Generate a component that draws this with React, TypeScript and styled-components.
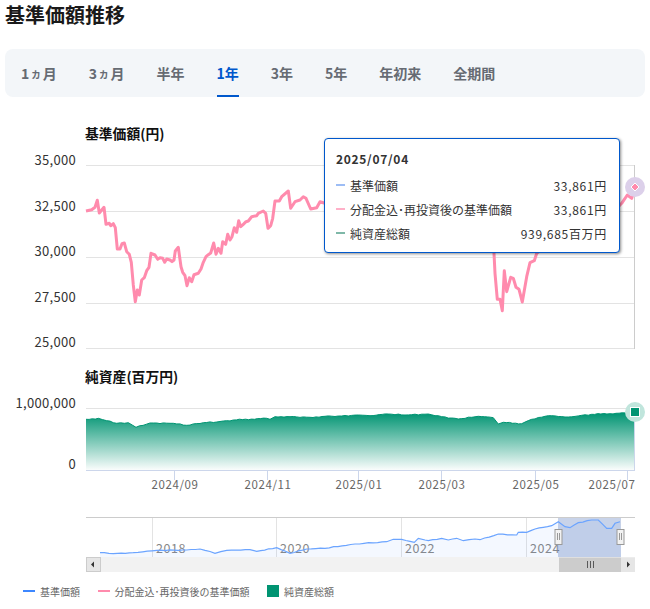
import styled, { createGlobalStyle } from 'styled-components';

const GlobalStyle = createGlobalStyle`
  html, body {
    margin: 0;
    padding: 0;
    background: #fff;
    font-family: "Noto Sans CJK JP", "Noto Sans", sans-serif;
  }
`;

const Page = styled.div`
  width: 650px;
  height: 609px;
  overflow: hidden;
  box-sizing: border-box;
  padding: 0 5px;
`;

const Title = styled.h2`
  margin: 0;
  height: 30px;
  line-height: 30px;
  font-size: 20px;
  font-weight: 700;
  color: #1a1a1a;
`;

const Tabs = styled.div`
  display: flex;
  gap: 32px;
  height: 48px;
  margin-top: 19px;
  padding: 0 16px;
  background: #f3f6f9;
  border-radius: 8px;
`;

const Tab = styled.div<{ $active?: boolean }>`
  display: flex;
  align-items: center;
  height: 48px;
  box-sizing: border-box;
  font-size: 14px;
  font-weight: 700;
  color: ${({ $active }) => ($active ? '#0058cc' : '#666b73')};
  box-shadow: ${({ $active }) => ($active ? 'inset 0 -2px 0 #0058cc' : 'none')};
`;

const Small = styled.span`
  font-size: 11px;
  margin: 0 1.25px;
`;

const ChartBlock = styled.section<{ $top: number }>`
  position: relative;
  margin: ${({ $top }) => $top}px -5px 0;
`;

const ChartTitle = styled.div`
  height: 18px;
  line-height: 16px;
  padding-left: 85px;
  font-size: 13.8px;
  font-weight: 700;
  color: #111;
`;

const Plot = styled.svg`
  display: block;
`;

const AxisLabel = styled.text`
  font-size: 13px;
  fill: #333;
  letter-spacing: 0.3px;
  text-anchor: end;
`;

const DateLabel = styled.text`
  font-size: 11.5px;
  fill: #666;
  letter-spacing: 0.6px;
  text-anchor: middle;
`;

const YearLabel = styled.text`
  font-size: 12.5px;
  fill: #888;
  letter-spacing: 0.6px;
`;

const Tooltip = styled.div`
  position: absolute;
  left: 324px;
  top: 13px;
  width: 296px;
  height: 115px;
  box-sizing: border-box;
  padding: 11px 12px 0 11px;
  background: #fff;
  border: 1px solid #0058cc;
  border-radius: 4px;
  box-shadow: 1px 1px 3px rgba(0, 0, 0, 0.45);
  color: #333;
`;

const TooltipDate = styled.div`
  height: 18px;
  line-height: 18px;
  font-size: 12px;
  font-weight: 700;
  letter-spacing: 0.7px;
  margin-bottom: 5px;
`;

const TooltipRow = styled.div`
  display: flex;
  align-items: center;
  height: 24px;
  font-size: 12px;
`;

const TooltipMark = styled.i<{ $color: string }>`
  width: 9px;
  height: 2px;
  margin-right: 5px;
  background: ${({ $color }) => $color};
`;

const TooltipValue = styled.span`
  margin-left: auto;
  letter-spacing: 0.7px;
`;

const Legend = styled.div`
  display: flex;
  align-items: center;
  height: 18px;
  margin-top: 7px;
  padding-left: 18px;
  gap: 17.5px;
  font-size: 10px;
  color: #666;
`;

const LegendItem = styled.div`
  display: flex;
  align-items: center;
  gap: 5px;
`;

const LegendLine = styled.i<{ $color: string }>`
  width: 12px;
  height: 2px;
  background: ${({ $color }) => $color};
`;

const LegendSquare = styled.i`
  width: 12px;
  height: 12px;
  background: #009472;
`;

type P = [number, number];

// points were read off 3x crops, map them back to page coords
const crop = (pts: P[], ox: number, oy: number): P[] =>
  pts.map(([x, y]) => [ox + x / 3, oy + y / 3]);

const toPoints = (pts: P[]): string =>
  pts.map(([x, y]) => `${x.toFixed(1)},${y.toFixed(1)}`).join(' ');

// the real series is daily, so add a small fixed wobble between the read-off points
const wobble = (pts: P[], step: number, amount: number): P[] => {
  const out: P[] = [];
  pts.forEach(([x, y], i) => {
    out.push([x, y]);
    const next = pts[i + 1];
    if (!next) return;
    const n = Math.floor((next[0] - x) / step);
    for (let k = 1; k < n; k++) {
      const t = k / n;
      const px = x + (next[0] - x) * t;
      const noise = Math.sin(px * 1.7) * Math.cos(px * 0.63) * amount;
      out.push([px, y + (next[1] - y) * t + noise]);
    }
  });
  return out;
};

const navLeft = toPoints(crop(
  [[258,258],[275,254],[285,247],[292,226],[298,264],[312,247],[318,298],[328,295],[332,302],[340,296],[346,308],[352,372],[360,372],[366,356],[373,354],[380,380],[388,388],[394,412],[400,480],[406,530],[412,495],[418,510],[425,465],[433,458],[440,437],[447,427],[453,385],[465,390],[473,403],[480,398],[488,400],[494,412],[500,402],[510,405],[516,410],[522,405],[526,378],[535,367],[543,425],[548,442],[555,452],[561,482],[568,458],[575,470],[582,449],[595,445],[603,432],[610,412],[618,395],[625,389],[632,384],[641,354],[648,388],[655,370],[663,385],[668,350],[677,358],[683,328],[690,345],[696,335],[703,308],[710,322],[716,287],[722,305],[730,298],[738,290],[745,288],[755,275],[770,272],[775,265],[790,258],[797,265],[804,310],[812,302],[818,280],[825,228],[838,228],[845,215],[865,198],[872,250],[885,230],[900,225],[910,215],[918,220],[932,252],[950,248],[960,230],[975,235]],
  0, 125,
));
const navMiddle = toPoints(crop(
  [[515,-60],[522,40],[525,100],[532,178],[540,178],[547,212],[553,92],[560,155],[572,112],[580,115],[588,142],[597,148],[607,186],[620,110],[630,68],[643,62],[650,40],[662,30]],
  320, 240,
));
const navRight = toPoints(crop([[895,230],[905,220],[922,195],[935,205],[945,170]], 320, 130));

const assetPts = wobble(
  [
    ...crop([[258,163],[295,160],[320,167],[350,175],[385,173],[408,187],[450,174],[520,175],[560,181],[610,173],[650,171],[700,165],[800,160],[810,163],[825,155],[870,155],[930,157]], 0, 365),
    ...crop([[0,154],[50,153],[100,150],[135,152],[190,147],[240,150],[310,147],[350,155],[400,162],[460,154],[505,158],[520,177],[535,172],[590,176],[620,163],[670,152],[730,156],[800,148],[928,143]], 325, 365),
  ],
  3,
  0.5,
);
const assetTop = toPoints(assetPts);

const overview = toPoints(wobble(
  [
    ...crop([[300,143],[340,146],[400,143],[470,136],[560,135],[600,132],[645,145],[680,136],[750,134],[770,139],[830,128],[870,145],[920,132]], 0, 505),
    ...crop([[0,130],[90,117],[185,110],[205,103],[230,103],[268,112],[280,100],[300,105],[310,107],[350,100],[370,105],[395,100],[415,107],[450,102],[465,104],[520,87],[575,90],[580,82],[605,82],[630,72],[680,62],[700,50],[720,65],[735,68],[760,53],[800,45],[820,45],[845,70],[860,70],[870,55],[885,50]], 325, 505),
  ],
  4,
  0.4,
));

const priceTicks: [string, number, number][] = [
  ['35,000', 165, 165],
  ['32,500', 211, 211],
  ['30,000', 257, 256],
  ['27,500', 303, 302],
  ['25,000', 348, 347],
];

const dateTicks: [string, number][] = [
  ['2024/09', 174],
  ['2024/11', 267],
  ['2025/01', 358],
  ['2025/03', 441],
  ['2025/05', 535],
  ['2025/07', 627],
];

const tabs = [
  ['1', '月'],
  ['3', '月'],
  ['半年'],
  ['1年'],
  ['3年'],
  ['5年'],
  ['年初来'],
  ['全期間'],
];

function PriceChart() {
  return (
    <ChartBlock $top={28}>
      <ChartTitle>基準価額(円)</ChartTitle>
      <Plot width={650} height={215} viewBox="0 143 650 215">
        {priceTicks.map(([label, y, textY]) => (
          <g key={label}>
            <line x1={86} x2={634} y1={y + 0.5} y2={y + 0.5} stroke="#e3e3e3" />
            <AxisLabel x={76} y={textY}>{label}</AxisLabel>
          </g>
        ))}
        <line x1={634.5} x2={634.5} y1={165} y2={349} stroke="#ccc" />
        <polyline points={navLeft} fill="none" stroke="#ff8bad" strokeWidth={3} strokeLinejoin="round" />
        <polyline points={navMiddle} fill="none" stroke="#ff8bad" strokeWidth={3} strokeLinejoin="round" />
        <polyline points={navRight} fill="none" stroke="#ff8bad" strokeWidth={3} strokeLinejoin="round" />
        <circle cx={635} cy={187} r={10} fill="#dcd0ea" />
        <path d="M635 183l4 4-4 4-4-4z" fill="#ff8bad" stroke="#fff" />
      </Plot>
      <Tooltip>
        <TooltipDate>2025/07/04</TooltipDate>
        <TooltipRow>
          <TooltipMark $color="#9dbdf5" />
          基準価額
          <TooltipValue>33,861円</TooltipValue>
        </TooltipRow>
        <TooltipRow>
          <TooltipMark $color="#ffb0c8" />
          分配金込･再投資後の基準価額
          <TooltipValue>33,861円</TooltipValue>
        </TooltipRow>
        <TooltipRow>
          <TooltipMark $color="#7fb8a8" />
          純資産総額
          <TooltipValue>939,685百万円</TooltipValue>
        </TooltipRow>
      </Tooltip>
    </ChartBlock>
  );
}

function AssetChart() {
  return (
    <ChartBlock $top={10}>
      <ChartTitle>純資産(百万円)</ChartTitle>
      <Plot width={650} height={114} viewBox="0 386 650 114">
        <defs>
          <linearGradient id="assetFill" x1="0" y1="0" x2="0" y2="1">
            <stop offset="0" stopColor="#009472" />
            <stop offset="1" stopColor="#009472" stopOpacity={0.02} />
          </linearGradient>
        </defs>
        <line x1={86} x2={634} y1={408.5} y2={408.5} stroke="#e3e3e3" />
        <AxisLabel x={76} y={408}>1,000,000</AxisLabel>
        <AxisLabel x={76} y={469}>0</AxisLabel>
        <polygon points={`86,470 ${assetTop} 634,470`} fill="url(#assetFill)" />
        <polyline points={assetTop} fill="none" stroke="#009472" />
        <line x1={634.5} x2={634.5} y1={412} y2={470} stroke="#ccd6eb" />
        <line x1={86} x2={635} y1={470.5} y2={470.5} stroke="#ccd6eb" />
        {dateTicks.map(([label, x]) => (
          <g key={label}>
            <line x1={x + 0.5} x2={x + 0.5} y1={470} y2={480} stroke="#ccd6eb" />
            <DateLabel x={label === '2025/07' ? 612 : x + 1} y={489}>{label}</DateLabel>
          </g>
        ))}
        <circle cx={635} cy={412} r={10} fill="#c0e5dc" />
        <rect x={630.5} y={407.5} width={9} height={9} fill="#009472" stroke="#fff" />
      </Plot>
    </ChartBlock>
  );
}

function Handle({ x }: { x: number }) {
  return (
    <g>
      <rect x={x - 3.5} y={529.5} width={7} height={15} fill="#f2f2f2" stroke="#999" />
      <path d={`M${x - 1} 533v7M${x + 1} 533v7`} stroke="#999" />
    </g>
  );
}

function Navigator() {
  return (
    <ChartBlock $top={10}>
      <Plot width={650} height={65} viewBox="0 510 650 65">
        <line x1={86} x2={635} y1={517.5} y2={517.5} stroke="#ccc" />
        {[152, 276, 401, 526].map(x => (
          <line key={x} x1={x + 0.5} x2={x + 0.5} y1={518} y2={557} stroke="#e3e3e3" />
        ))}
        <YearLabel x={156} y={553}>2018</YearLabel>
        <YearLabel x={280} y={553}>2020</YearLabel>
        <YearLabel x={405} y={553}>2022</YearLabel>
        <YearLabel x={530} y={553}>2024</YearLabel>
        <polygon points={`100,557 ${overview} 621,557`} fill="#3d87ff" fillOpacity={0.06} />
        <rect x={558} y={518} width={63} height={39} fill="#335cad" fillOpacity={0.27} />
        <polyline points={overview} fill="none" stroke="#6ba4ff" strokeWidth={1.2} />
        <rect x={86} y={557} width={549} height={15} fill="#f2f2f2" />
        <rect x={86.5} y={557.5} width={14} height={14} fill="#e6e6e6" stroke="#ccc" />
        <path d="M91 564.5l3-3v6z" fill="#333" />
        <rect x={559} y={557.5} width={62} height={14.5} fill="#ccc" />
        <path d="M587.5 561v7M590.5 561v7M593.5 561v7" stroke="#333" strokeOpacity={0.75} />
        <rect x={621} y={557.5} width={14} height={14.5} fill="#e6e6e6" />
        <path d="M630 564.5l-3-3v6z" fill="#333" />
        <Handle x={558.5} />
        <Handle x={620.5} />
      </Plot>
    </ChartBlock>
  );
}

export default function App() {
  return (
    <Page>
      <GlobalStyle />
      <Title>基準価額推移</Title>
      <Tabs>
        {tabs.map(([a, b], i) => (
          <Tab key={i} $active={a === '1年'}>
            {b ? (
              <>
                {a}
                <Small>ヵ</Small>
                {b}
              </>
            ) : (
              a
            )}
          </Tab>
        ))}
      </Tabs>
      <PriceChart />
      <AssetChart />
      <Navigator />
      <Legend>
        <LegendItem>
          <LegendLine $color="#3d87ff" />
          基準価額
        </LegendItem>
        <LegendItem>
          <LegendLine $color="#ff8bad" />
          分配金込･再投資後の基準価額
        </LegendItem>
        <LegendItem>
          <LegendSquare />
          純資産総額
        </LegendItem>
      </Legend>
    </Page>
  );
}
